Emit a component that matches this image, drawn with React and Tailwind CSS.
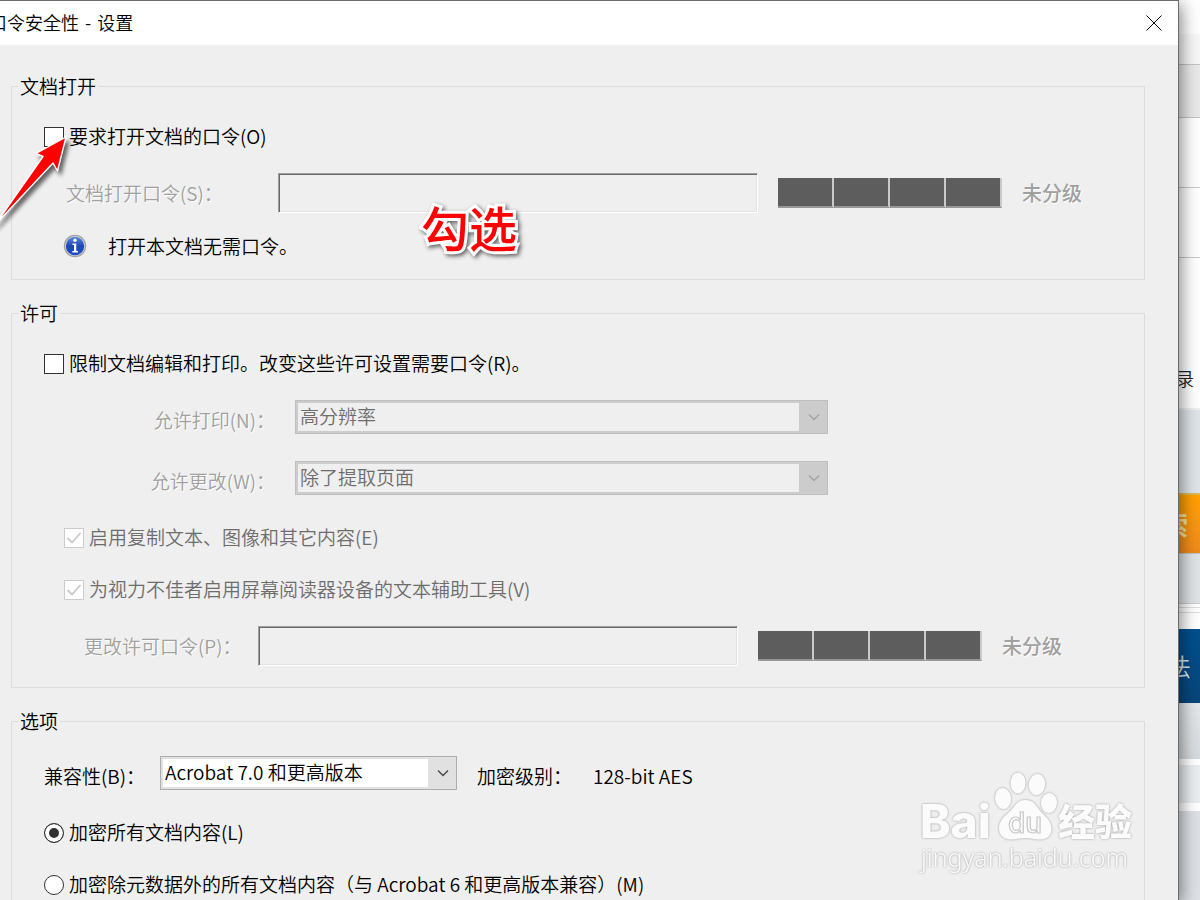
import { useState } from 'react';

const DIM = 'text-[#a0a0a0] [text-shadow:1px_1px_0_#fff]';

function CheckRow({ label, className = '', ...props }) {
  const color = props.disabled ? 'text-[#6d6d6d]' : 'text-black';
  return (
    <label className={`flex h-6 items-center gap-[5px] ${color} ${className}`}>
      <span className="grid shrink-0">
        <input
          type="checkbox"
          className="peer col-start-1 row-start-1 h-5 w-5 appearance-none border border-[#333] bg-white disabled:border-[#ccc]"
          {...props}
        />
        <svg viewBox="0 0 20 20" className="pointer-events-none invisible col-start-1 row-start-1 h-5 w-5 peer-checked:visible" fill="none">
          <path d="M3.5 10 L8 14.5 L16.5 5" stroke={props.disabled ? '#c8c8c8' : '#333'} strokeWidth="1.8" />
        </svg>
      </span>
      <span className="pb-[2px]">{label}</span>
    </label>
  );
}

function RadioRow({ label, className = '', ...props }) {
  return (
    <label className={`flex h-6 items-center gap-[5px] ${className}`}>
      <input
        type="radio"
        name="encrypt"
        className="h-5 w-5 shrink-0 appearance-none rounded-full border border-[#333] bg-white checked:bg-[#333] checked:shadow-[inset_0_0_0_4px_#fff]"
        {...props}
      />
      <span className="pb-[2px]">{label}</span>
    </label>
  );
}

function Combo({ id, options, disabled, className = '' }) {
  const frame = disabled ? 'border-[#bfbfbf] bg-[#ccc]' : 'border-[#adadad] bg-[#e1e1e1]';
  const field = disabled ? 'bg-[#efefef] text-[#6d6d6d]' : 'bg-white text-black';
  return (
    <div className={`flex h-[34px] border p-[2px] ${frame} ${className}`}>
      <select id={id} disabled={disabled} className={`min-w-0 flex-1 appearance-none pb-[2px] pl-[2px] leading-[26px] opacity-100 outline-none ${field}`}>
        {options.map((o) => (
          <option key={o}>{o}</option>
        ))}
      </select>
      <svg viewBox="0 0 26 28" className="w-[26px] shrink-0" fill="none">
        <path d="M10 11.5 L15 16.5 L20 11.5" stroke={disabled ? '#a3a3a3' : '#444'} strokeWidth="1.3" />
      </svg>
    </div>
  );
}

function PasswordRow({ id, label, labelClass, className = '' }) {
  return (
    <div className={`flex h-10 items-center ${className}`}>
      <label htmlFor={id} className={`shrink-0 whitespace-nowrap ${DIM} ${labelClass}`}>{label}</label>
      <input
        id={id}
        type="password"
        disabled
        className="h-10 min-w-0 flex-1 border border-t-[#a0a0a0] border-r-white border-b-white border-l-[#a0a0a0] bg-[#efefef] px-2 shadow-[inset_1px_1px_0_#696969,inset_-1px_-1px_0_#e3e3e3]"
      />
      <div className="ml-5 flex h-[30px] shrink-0">
        {[0, 1, 2, 3].map((n) => (
          <span key={n} className="w-14 border-r-2 border-b-2 border-r-[#cacaca] border-b-[#979797] bg-[#5d5d5d]" />
        ))}
      </div>
      <span className={`ml-5 shrink-0 text-[20px] font-medium ${DIM}`}>未分级</span>
    </div>
  );
}

function Group({ title, className = '', children }) {
  return (
    <fieldset className={`min-w-0 border border-[#dcdcdc] ${className}`}>
      <legend className="ml-[6px] px-[2px]">{title}</legend>
      {children}
    </fieldset>
  );
}

function InfoIcon() {
  return (
    <svg viewBox="0 0 24 24" className="h-6 w-6 shrink-0">
      <defs>
        <linearGradient id="info" x1="0" y1="0" x2="0" y2="1">
          <stop offset="0" stopColor="#5b8ae0" />
          <stop offset="0.5" stopColor="#1e47b4" />
          <stop offset="1" stopColor="#1c50c8" />
        </linearGradient>
      </defs>
      <circle cx="12" cy="12" r="11.2" fill="#a3a3a3" />
      <circle cx="12" cy="12" r="10" fill="#d6d6d6" />
      <circle cx="12" cy="12" r="9.2" fill="url(#info)" />
      <circle cx="12" cy="6.3" r="1.7" fill="#fff" />
      <path d="M9.5 9.5 H13.3 V17 H15 V18.5 H9.3 V17 H11 V11 H9.5 Z" fill="#fff" />
    </svg>
  );
}

function Arrow() {
  return (
    <svg viewBox="0 0 84 110" className="pointer-events-none absolute top-[125px] left-0 h-[110px] w-[84px] overflow-visible drop-shadow-[3px_4px_2px_rgba(0,0,0,0.6)]">
      <path d="M66 11 L36 27.5 L43 30.5 L-5 99 L53 37 L57.500 45 Z" fill="#f00" stroke="#fff" strokeWidth="1.4" strokeLinejoin="round" />
    </svg>
  );
}

function Watermark() {
  return (
    <svg viewBox="0 0 224 110" className="pointer-events-none absolute right-[36px] bottom-[22px] h-[110px] w-[224px] drop-shadow-[0_0_1px_rgba(0,0,0,0.35)]" fill="#fbfbfb">
      <text x="2" y="70" fontFamily="Inter, Liberation Sans, sans-serif" fontWeight="800" fontSize="46">Bai</text>
      <ellipse cx="85" cy="30.500" rx="8" ry="10.500" transform="rotate(-6 85 30)" />
      <ellipse cx="100" cy="15" rx="7.500" ry="10.500" />
      <ellipse cx="119" cy="16.500" rx="8.200" ry="10.500" transform="rotate(8 119 16)" />
      <ellipse cx="131" cy="35" rx="8" ry="10" transform="rotate(4 131 35)" />
      <path d="M107 32 C98 32 97 40 89 46 C83 51 81 56 81 60 C81 68 87 72 94 71.500 C100 71 103 70 108 70 C113 70 117 72 123 71.500 C130 71 134 66 133.500 60 C133 53 129 50 125 46 C118 39 117 32 107 32 Z" />
      <text x="90" y="65" fontFamily="Inter, Liberation Sans, sans-serif" fontWeight="500" fontSize="28" stroke="#c8c8c8" strokeWidth="1.2">du</text>
      <text x="140" y="68" fontFamily="Noto Sans CJK SC, sans-serif" fontWeight="900" fontSize="37">经验</text>
      <text x="3" y="99" fontFamily="Noto Sans, sans-serif" fontSize="25">jingyan.baidu.com</text>
    </svg>
  );
}

// sliver of the browser page that shows to the right of the dialog
function PageBehind() {
  return (
    <div className="flex w-[21px] shrink-0 flex-col bg-white">
      <div className="h-[34px]" />
      <div className="h-[30px] bg-[#f7f7f7]" />
      <div className="h-[54px] border-y border-[#c4c4c4] bg-[#e9e9e9]" />
      <div className="h-[70px] border-b border-[#c8c8c8]" />
      <div className="h-[70px] border-b border-[#c8c8c8]" />
      <div className="flex h-[150px] items-end justify-end pr-[6px] pb-4 text-[18px] leading-[28px] text-[#222]">录</div>
      <div className="h-[85px] border-t-2 border-[#eee] bg-[#dfe4e8]" />
      <div className="flex h-[60px] items-center justify-end border-t-2 border-[#dcb950] bg-linear-to-b from-[#ffa200] to-[#f08a1c] pr-3 text-[26px] font-bold text-[#f8e39a]">索</div>
      <div className="h-[50px] border-t border-[#b9c6c4] bg-[#dfe3e6]" />
      <div className="flex h-[26px] flex-col gap-1 border-t border-[#ccc] pt-[3px]">
        <div className="h-px bg-[#ddd]" />
        <div className="h-px bg-[#ddd]" />
      </div>
      <div className="flex h-[74px] items-center justify-end bg-linear-to-b from-[#00508f] to-[#08467a] pr-[9px] text-[24px] text-[#dbe6f0]">法</div>
      <div className="h-[56px] bg-linear-to-b from-[#e4e7ea] to-[#d5dade]" />
      <div className="h-[44px] border-t-[6px] border-white bg-[#e9edf0]" />
      <div className="flex-1 border-t-8 border-white bg-[#dde1e5]" />
    </div>
  );
}

export default function App() {
  const [needOpen, setNeedOpen] = useState(false);
  const [restrict, setRestrict] = useState(false);
  const [scope, setScope] = useState('all');

  return (
    <div className="relative flex h-screen overflow-hidden bg-white font-['Noto_Sans_CJK_SC',sans-serif] text-[19px] leading-[24px] font-[350] text-black">
      <main className="relative z-10 flex min-w-0 flex-1 flex-col border-t border-r border-[#6b6b6b] bg-[#efefef] shadow-[2px_4px_16px_rgba(0,0,0,0.5)]">
        <header className="flex h-11 shrink-0 items-center justify-between bg-white pr-4">
          <h1 className="-ml-[11px] pb-[2px] text-[18px] font-[350]">
            口令安全性<span className="mx-[2px]"> - </span>设置
          </h1>
          <button aria-label="关闭" className="h-4 w-4">
            <svg viewBox="0 0 16 16" className="h-4 w-4" fill="none">
              <path d="M0.500 0.500 L15.500 15.500 M15.500 0.500 L0.500 15.500" stroke="#000" strokeWidth="1" />
            </svg>
          </button>
        </header>

        <div className="flex flex-1 flex-col gap-[21px] pt-[29px] pr-[33px] pl-[11px]">
          <Group title="文档打开" className="pb-[21px]">
            <CheckRow
              label="要求打开文档的口令(O)"
              className="mt-[27px] ml-8"
              checked={needOpen}
              onChange={(e) => setNeedOpen(e.target.checked)}
            />
            <PasswordRow id="open-pw" label="文档打开口令(S)：" labelClass="w-[212px]" className="mt-6 mr-[62px] ml-[54px]" />
            <p className="mt-[21px] ml-[51px] flex h-6 items-center gap-[21px]">
              <InfoIcon />
              打开本文档无需口令。
            </p>
          </Group>

          <Group title="许可" className="pb-[21px]">
            <CheckRow
              label="限制文档编辑和打印。改变这些许可设置需要口令(R)。"
              className="mt-[27px] ml-8"
              checked={restrict}
              onChange={(e) => setRestrict(e.target.checked)}
            />
            <div className="mt-6 flex items-center gap-5">
              <label htmlFor="print" className={`w-[263px] pt-[6px] text-right ${DIM}`}>允许打印(N)：</label>
              <Combo id="print" disabled options={['高分辨率']} className="max-w-[533px] flex-1" />
            </div>
            <div className="mt-[27px] flex items-center gap-5">
              <label htmlFor="change" className={`w-[263px] pt-[6px] text-right ${DIM}`}>允许更改(W)：</label>
              <Combo id="change" disabled options={['除了提取页面']} className="max-w-[533px] flex-1" />
            </div>
            <CheckRow label="启用复制文本、图像和其它内容(E)" className="mt-[31px] ml-[52px]" defaultChecked disabled />
            <CheckRow label="为视力不佳者启用屏幕阅读器设备的文本辅助工具(V)" className="mt-7 ml-[52px]" defaultChecked disabled />
            <PasswordRow id="perm-pw" label="更改许可口令(P)：" labelClass="w-[174px]" className="mt-6 mr-[82px] ml-[72px]" />
          </Group>

          <Group title="选项" className="flex-1 border-b-0">
            <div className="mt-[23px] ml-8 flex items-center">
              <label htmlFor="compat" className="w-[116px] pt-[6px]">兼容性(B)：</label>
              <Combo id="compat" options={['Acrobat 7.0 和更高版本']} className="w-[297px]" />
              <span className="ml-5 w-[116px] pt-[6px]">加密级别：</span>
              <span className="pt-[6px]">128-bit AES</span>
            </div>
            <RadioRow
              label="加密所有文档内容(L)"
              className="mt-[31px] ml-8"
              checked={scope === 'all'}
              onChange={() => setScope('all')}
            />
            <RadioRow
              label="加密除元数据外的所有文档内容（与 Acrobat 6 和更高版本兼容）(M)"
              className="mt-7 ml-8"
              checked={scope === 'nometa'}
              onChange={() => setScope('nometa')}
            />
          </Group>
        </div>

        <Arrow />
        <div className="pointer-events-none absolute top-[201px] left-[421px] text-[48px] leading-[48px] font-medium text-[#f00] drop-shadow-[2px_2px_2px_rgba(0,0,0,0.6)] [-webkit-text-stroke:6px_#fff] [paint-order:stroke_fill]">
          勾选
        </div>
        <Watermark />
      </main>
      <PageBehind />
    </div>
  );
}
